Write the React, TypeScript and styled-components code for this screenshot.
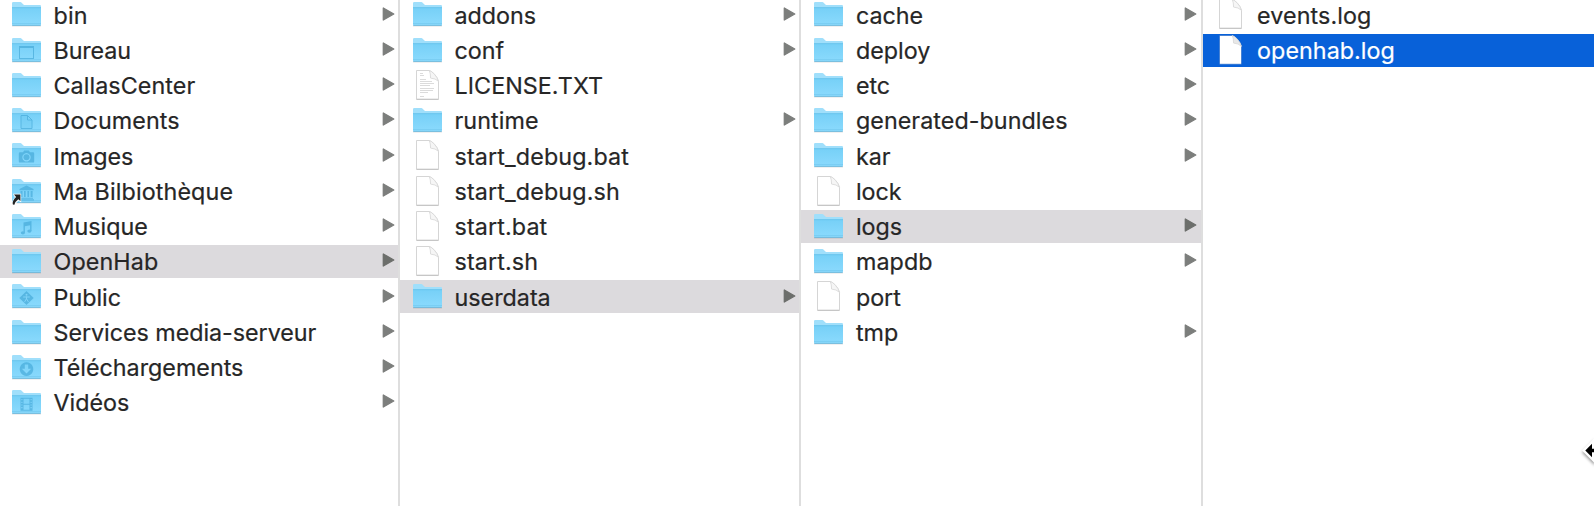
import React from 'react';
import styled, { createGlobalStyle } from 'styled-components';

type Kind = 'folder' | 'file' | 'text';
type Emblem = 'desktop' | 'document' | 'camera' | 'library' | 'music' | 'public' | 'download' | 'film';
type Selection = 'none' | 'path' | 'active';
interface Item { name: string; kind: Kind; emblem?: Emblem; alias?: boolean; selected?: Selection; spacing?: number; }

const f = (name: string, extra: Partial<Item> = {}): Item => ({ name, kind: 'folder', ...extra });
const d = (name: string, extra: Partial<Item> = {}): Item => ({ name, kind: 'file', ...extra });

const columns: Item[][] = [
  [
    f('bin', { spacing: 0.2 }),
    f('Bureau', { emblem: 'desktop', spacing: -0.1 }),
    f('CallasCenter', { spacing: 0.08 }),
    f('Documents', { emblem: 'document', spacing: 0.1 }),
    f('Images', { emblem: 'camera' }),
    f('Ma Bilbiothèque', { emblem: 'library', alias: true, spacing: 0.13 }),
    f('Musique', { emblem: 'music' }),
    f('OpenHab', { selected: 'path', spacing: 0.1 }),
    f('Public', { emblem: 'public' }),
    f('Services media-serveur', { spacing: -0.04 }),
    f('Téléchargements', { emblem: 'download' }),
    f('Vidéos', { emblem: 'film' }),
  ],
  [
    f('addons'),
    f('conf'),
    d('LICENSE.TXT', { kind: 'text', spacing: 0.06 }),
    f('runtime', { spacing: 0.1 }),
    d('start_debug.bat', { spacing: 0.13 }),
    d('start_debug.sh', { spacing: 0.14 }),
    d('start.bat', { spacing: 0.12 }),
    d('start.sh', { spacing: 0.12 }),
    f('userdata', { selected: 'path' }),
  ],
  [
    f('cache'),
    f('deploy'),
    f('etc'),
    f('generated-bundles', { spacing: 0.06 }),
    f('kar'),
    d('lock'),
    f('logs', { selected: 'path' }),
    f('mapdb', { spacing: 0.1 }),
    d('port'),
    f('tmp', { spacing: 0.1 }),
  ],
  [d('events.log', { spacing: 0.1 }), d('openhab.log', { selected: 'active', spacing: 0.04 })],
];

const GlobalStyle = createGlobalStyle`
  body { margin: 0; background: #fff; }
`;

const Browser = styled.main`
  position: relative;
  display: grid;
  grid-template-columns: 400px 401.4px 401.2px 1fr;
  width: 1594px;
  height: 506px;
  overflow: hidden;
  background: #fff;
  font-family: Inter, 'Liberation Sans', sans-serif;
`;

const Column = styled.ul<{ $first: boolean; $last: boolean }>`
  --inset: ${p => (p.$first ? '11px' : '12px')};
  box-sizing: border-box;
  display: flex;
  flex-direction: column;
  gap: 2.25px;
  min-width: 0;
  margin: -1.75px 0 0;
  padding: 0;
  list-style: none;
  border-right: ${p => (p.$last ? 'none' : '2px solid #dedede')};
`;

const backgrounds: Record<Selection, string> = { none: 'transparent', path: '#dcdadd', active: '#0861d9' };

const Row = styled.li<{ $selected: Selection }>`
  box-sizing: border-box;
  flex: none;
  display: grid;
  grid-template-columns: 32px 1fr 13px;
  column-gap: 10.5px;
  align-items: center;
  height: 33px;
  padding: 0 3.5px 0 var(--inset);
  background: ${p => backgrounds[p.$selected]};
  color: ${p => (p.$selected === 'active' ? '#fff' : '#262626')};
`;

const Icon = styled.svg`
  display: block;
  width: 32px;
  height: 33px;
  overflow: visible;
`;

const Label = styled.span<{ $spacing: number }>`
  font-size: 23.3px;
  line-height: 33px;
  letter-spacing: ${p => p.$spacing}px;
  white-space: nowrap;
  -webkit-text-stroke: 0.2px currentColor;
  padding-top: 0.25px;
`;

const Arrow = styled.svg`
  display: block;
  width: 13px;
  height: 16px;
  margin-top: -2.5px;
`;

const Cursor = styled.svg`
  position: absolute;
  left: 1580px;
  top: 435px;
  width: 30px;
  height: 34px;
  filter: drop-shadow(0 2px 1.5px rgba(0, 0, 0, 0.4));
`;

function EmblemMark({ type }: { type: Emblem }) {
  const c = '#45a9d8';
  switch (type) {
    case 'desktop':
      return <g fill="none" stroke={c}><rect x="8.5" y="12.5" width="14" height="12" /><path d="M8 13h15" strokeWidth="2" /></g>;
    case 'document':
      return <path d="M10 11.500h6.500l4.500 4.500v8.500H10zM16.500 11.500V16H21" fill="#5bbce8" fillOpacity=".3" stroke={c} />;
    case 'camera':
      return <g fill={c}><path fillRule="evenodd" d="M9 13.200h3l1.200-1.700h4.600l1.200 1.700h3q1.200 0 1.200 1.200v8q0 1.200-1.200 1.200H9q-1.200 0-1.200-1.200v-8q0-1.200 1.200-1.200zm6.500.9a4.200 4.200 0 1 0 .01 0z" /><circle cx="15.5" cy="18.3" r="3" /></g>;
    case 'library':
      return <path fill={c} d="M15.500 10.500l7 3.400v1.400h-14v-1.400zM9.500 16h2v6h-2zm3.500 0h1.700v6H13zm3.400 0h1.700v6h-1.700zm3.200 0h2v6h-2zM9 22.700h13v1H9zM8 24.200h15v1.200H8z" />;
    case 'music':
      return <g fill={c}><path d="M12.500 12.600l8-1.600v10h-1.400v-5.700l-5.200 1v6.500h-1.400z" /><ellipse cx="11.9" cy="22.8" rx="2.1" ry="1.6" /><ellipse cx="18.4" cy="21.1" rx="2.1" ry="1.6" /></g>;
    case 'public':
      return (
        <g>
          <path d="M15.500 11l7.200 7-7.200 7-7.200-7z" fill={c} />
          <circle cx="15.5" cy="14.7" r="1" fill="#80d2f8" />
          <path d="M12.200 17h6.600M15.500 16.500v2.500M15.500 18.700l-1.900 3.200M15.500 18.700l1.900 3.200" fill="none" stroke="#80d2f8" strokeWidth="1" />
        </g>
      );
    case 'download':
      return <path fillRule="evenodd" fill={c} d="M15.500 11.300a6.800 6.800 0 1 0 .01 0zM13.800 13.500h3.400v4.300h3l-4.700 4.800-4.700-4.800h3z" />;
    case 'film':
      return <path fillRule="evenodd" fill={c} d="M9.500 11.800h12v13h-12zm3 1v5h6v-5zm0 6v5h6v-5zM10.300 13v1.200h1.200V13zm0 2.700v1.200h1.200v-1.200zm0 2.700v1.200h1.200v-1.200zm0 2.700v1.200h1.200v-1.200zM19.500 13v1.200h1.200V13zm0 2.700v1.200h1.200v-1.200zm0 2.700v1.200h1.200v-1.200zm0 2.700v1.200h1.200v-1.200z" />;
  }
}

function FolderIcon({ item }: { item: Item }) {
  return (
    <Icon viewBox="0 0 32 33">
      <defs>
        <linearGradient id="folderFront" x1="0" y1="0" x2="0" y2="1">
          <stop offset="0" stopColor="#76d0f7" />
          <stop offset="1" stopColor="#8bdafd" />
        </linearGradient>
      </defs>
      <path d="M1 27.300h29v1H1z" fill="#000" opacity=".2" />
      <path d="M1 5.300q0-1.200 1.200-1.200h7q1 0 1.700.8l1.500 1.500q.6.600 1.500.6h15q1.100 0 1.100 1.100V11H1z" fill="#a0dffb" />
      <path d="M1 9.500h29v17.100q0 .9-.9.900H1.900q-.9 0-.9-.9z" fill="url(#folderFront)" />
      <path d="M1 9.700h29" stroke="#62bfe8" strokeWidth=".8" />
      <path d="M1 25.500h29" stroke="#74c9ef" strokeWidth=".7" />
      <path d="M1.400 27.400h28.200" stroke="#63b4d9" strokeWidth=".8" />
      {item.emblem && <g opacity=".68"><EmblemMark type={item.emblem} /></g>}
      {item.alias && (
        <g>
          <path d="M2 18.800H10.200V27.500L7.500 25.800Q4.500 28 3.800 31.500L.8 30Q.5 25.500 4 22.800z" fill="#fff" opacity=".92" />
          <path d="M3 19.600H9.400V26L7.300 24.200Q4 26.500 3.200 30L1.700 29.200Q1.300 25.500 5.100 22z" fill="#222" />
        </g>
      )}
    </Icon>
  );
}

function DocumentIcon({ item }: { item: Item }) {
  const active = item.selected === 'active';
  return (
    <Icon viewBox="0 0 32 33">
      <path
        d="M4.500 1.500h12.800q2.500.8 5.200 3.800t4 7v17.900h-22z"
        fill="#fff"
        stroke={active ? '#0a55bd' : '#d5d5d5'}
        strokeWidth={active ? 0.5 : 1}
      />
      {!active && <path d="M4.500 30.400h22" stroke="#c3c3c3" />}
      <path
        d="M17.300 1.500q1.300 3 1.300 7.600 4.600.1 7.900 3.200-1.300-4-4-7t-5.200-3.800z"
        fill={active ? '#e8e8e8' : '#f6f6f6'}
        stroke="#d6d6d6"
        strokeWidth=".8"
      />
      {item.kind === 'text' && (
        <path d="M8 4.500h3M8 6.500h4M8 10.500h6M8 12.500h12M8 14.500h14M8 16.500h10M8 19.500h14M8 21.500h13M8 23.500h8M8 27.500h4" stroke="#d2d2d2" strokeWidth=".8" />
      )}
    </Icon>
  );
}

export default function App() {
  return (
    <>
      <GlobalStyle />
      <Browser>
        {columns.map((items, i) => (
          <Column key={i} $first={i === 0} $last={i === columns.length - 1}>
            {items.map(item => (
              <Row key={item.name} $selected={item.selected ?? 'none'}>
                {item.kind === 'folder' ? <FolderIcon item={item} /> : <DocumentIcon item={item} />}
                <Label $spacing={item.spacing ?? 0}>{item.name}</Label>
                {item.kind === 'folder' && (
                  <Arrow viewBox="0 0 13 16">
                    <path d="M1.300 2v12l10.500-6z" fill={item.selected ? '#6c6e6b' : '#7c7e7c'} stroke={item.selected ? '#6c6e6b' : '#7c7e7c'} strokeWidth="1.3" strokeLinejoin="round" />
                  </Arrow>
                )}
              </Row>
            ))}
          </Column>
        ))}
        <Cursor viewBox="0 0 30 34">
          <path d="M2 15.500L15 2.500v26z" fill="#fff" />
          <path d="M5.300 15.500L12 8.800V13.800H30v3.400H12v5z" fill="#000" />
        </Cursor>
      </Browser>
    </>
  );
}
